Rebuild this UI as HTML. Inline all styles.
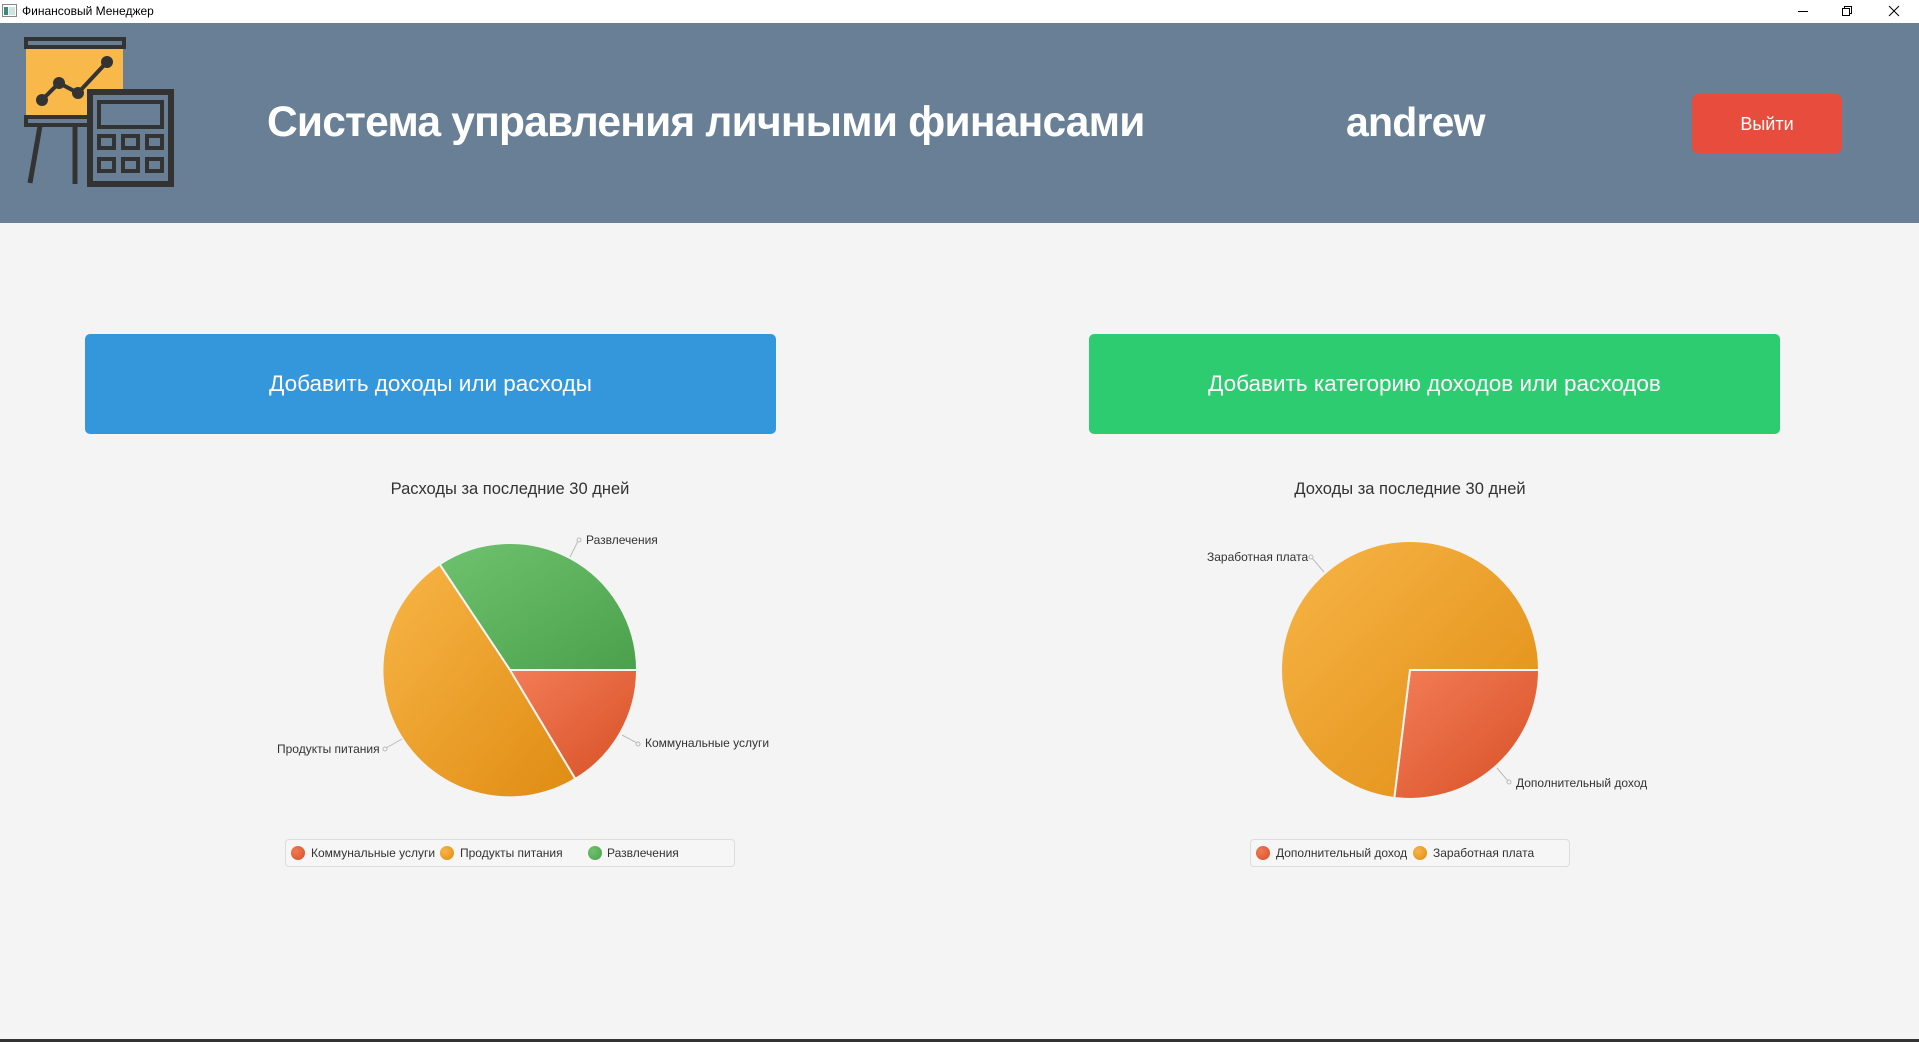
<!DOCTYPE html>
<html><head><meta charset="utf-8"><style>
*{margin:0;padding:0;box-sizing:border-box}
body{width:1919px;height:1042px;overflow:hidden;background:#f4f4f4;font-family:"Liberation Sans","DejaVu Sans",sans-serif;position:relative}
.tb{position:absolute;left:0;top:0;width:1919px;height:23px;background:#fff}
.tb .t{position:absolute;left:22px;top:4px;font-size:12px;color:#000}
.hd{position:absolute;left:0;top:23px;width:1919px;height:200px;background:#687f95}
.title{position:absolute;left:267px;top:99px;font-size:42.5px;font-weight:bold;color:#fff;white-space:nowrap;letter-spacing:-0.8px}
.user{position:absolute;left:1346px;top:99px;font-size:41px;font-weight:bold;color:#fff;letter-spacing:-0.8px}
.out{position:absolute;left:1692px;top:94px;width:150px;height:60px;background:#e74c3c;border-radius:7px;color:#fff;font-size:18px;text-align:center;line-height:60px}
.btn{position:absolute;top:334px;width:691px;height:100px;border-radius:5px;color:#fff;font-size:22.5px;text-align:center;line-height:100px}
.ct{position:absolute;top:480px;font-size:16.5px;color:#333;width:400px;text-align:center}
.lbl{position:absolute;font-size:12px;color:#333;white-space:nowrap}
.lg{position:absolute;top:839px;height:28px;border:1px solid #ddd;border-radius:4px;background:#f6f6f6}
.dot{position:absolute;width:14px;height:14px;border-radius:50%;top:846px}
</style></head><body>
<div class="tb">
<svg style="position:absolute;left:2px;top:4px" width="15" height="14"><rect x="0.5" y="0.5" width="14" height="12" fill="#fff" stroke="#888"/><rect x="2" y="3" width="4" height="8" fill="#3a8a7a"/><rect x="7" y="3" width="6" height="8" fill="#cfe6e0"/></svg>
<div class="t">Финансовый Менеджер</div>
<svg style="position:absolute;left:1795px;top:4px" width="120" height="16" stroke="#000" stroke-width="1" fill="none"><line x1="3" y1="7.5" x2="13" y2="7.5"/><rect x="47.5" y="4.5" width="7" height="7"/><path d="M49.5 4.5V2.5H56.5V9.5H54.5"/><path d="M94 2L104 12M104 2L94 12"/></svg>
</div>
<div class="hd">
<svg style="position:absolute;left:0;top:-23px" width="200" height="200">
<rect x="26" y="47" width="97" height="68" fill="#f8b84a"/>
<g fill="none" stroke="#333" stroke-width="4">
<rect x="26" y="39" width="98" height="8"/>
<rect x="26" y="117" width="72" height="8"/>
<line x1="40" y1="126" x2="30" y2="183" stroke-width="5"/>
<line x1="75" y1="126" x2="75" y2="184" stroke-width="5"/>
<polyline points="42,100 59,83 78,93 107,62" stroke-width="4"/>
</g>
<g fill="#333"><circle cx="42" cy="100" r="6"/><circle cx="59" cy="83" r="6"/><circle cx="78" cy="93" r="6"/><circle cx="107" cy="62" r="6"/></g>
<rect x="90" y="92" width="81" height="92" fill="#687f95" stroke="#333" stroke-width="6"/>
<g fill="none" stroke="#333" stroke-width="4">
<rect x="99" y="102" width="63" height="25"/>
<rect x="99" y="136" width="15" height="12"/><rect x="123" y="136" width="15" height="12"/><rect x="147" y="136" width="15" height="12"/>
<rect x="99" y="159" width="15" height="12"/><rect x="123" y="159" width="15" height="12"/><rect x="147" y="159" width="15" height="12"/>
</g>
</svg>
</div>
<div class="title">Система управления личными финансами</div>
<div class="user">andrew</div>
<div class="out">Выйти</div>
<div class="btn" style="left:85px;background:#3597db">Добавить доходы или расходы</div>
<div class="btn" style="left:1089px;background:#2ecc70">Добавить категорию доходов или расходов</div>
<div class="ct" style="left:310px">Расходы за последние 30 дней</div>
<div class="ct" style="left:1210px">Доходы за последние 30 дней</div>
<svg style="position:absolute;left:0;top:0" width="1919" height="1042">
<defs>
<linearGradient id="go" x1="0" y1="0" x2="1" y2="1"><stop offset="0" stop-color="#f8b547"/><stop offset="1" stop-color="#df8c12"/></linearGradient>
<linearGradient id="gg" x1="0" y1="0" x2="1" y2="1"><stop offset="0" stop-color="#6fc26f"/><stop offset="1" stop-color="#4ba14b"/></linearGradient>
<linearGradient id="gr" x1="0" y1="0" x2="1" y2="1"><stop offset="0" stop-color="#f27d57"/><stop offset="1" stop-color="#d84f25"/></linearGradient>
</defs>
<g stroke="#f4f4f4" stroke-width="2">
<path d="M510 670L637 670A127 127 0 0 0 439.6 564.3Z" fill="url(#gg)"/>
<path d="M510 670L439.6 564.3A127 127 0 0 0 575.4 778.9Z" fill="url(#go)"/>
<path d="M510 670L575.4 778.9A127 127 0 0 0 637 670Z" fill="url(#gr)"/>
<path d="M1410 670L1539 670A129 129 0 0 1 1394.3 798Z" fill="url(#gr)"/>
<path d="M1410 670L1394.3 798A129 129 0 1 1 1539 670Z" fill="url(#go)"/>
</g>
<g stroke="#bbb" stroke-width="1" fill="#f4f4f4">
<line x1="570" y1="557" x2="578" y2="541"/><circle cx="579" cy="540" r="2"/>
<line x1="622" y1="735" x2="637" y2="743"/><circle cx="638" cy="744" r="2"/>
<line x1="402" y1="739" x2="386" y2="748"/><circle cx="385" cy="749" r="2"/>
<line x1="1324" y1="572" x2="1312" y2="558"/><circle cx="1311" cy="557" r="2"/>
<line x1="1497" y1="768" x2="1508" y2="781"/><circle cx="1509" cy="782" r="2"/>
</g>
</svg>
<div class="lbl" style="left:586px;top:533px">Развлечения</div>
<div class="lbl" style="left:645px;top:736px">Коммунальные услуги</div>
<div class="lbl" style="left:277px;top:742px">Продукты питания</div>
<div class="lbl" style="left:1207px;top:550px">Заработная плата</div>
<div class="lbl" style="left:1516px;top:776px">Дополнительный доход</div>
<div class="lg" style="left:285px;width:450px"></div>
<div class="dot" style="left:291px;background:radial-gradient(circle at 35% 35%,#f07a55,#d84f25)"></div>
<div class="lbl" style="left:311px;top:846px">Коммунальные услуги</div>
<div class="dot" style="left:440px;background:radial-gradient(circle at 35% 35%,#f7b547,#df8c12)"></div>
<div class="lbl" style="left:460px;top:846px">Продукты питания</div>
<div class="dot" style="left:588px;background:radial-gradient(circle at 35% 35%,#6fc26f,#4ba14b)"></div>
<div class="lbl" style="left:607px;top:846px">Развлечения</div>
<div class="lg" style="left:1250px;width:320px"></div>
<div class="dot" style="left:1256px;background:radial-gradient(circle at 35% 35%,#f07a55,#d84f25)"></div>
<div class="lbl" style="left:1276px;top:846px">Дополнительный доход</div>
<div class="dot" style="left:1413px;background:radial-gradient(circle at 35% 35%,#f7b547,#df8c12)"></div>
<div class="lbl" style="left:1433px;top:846px">Заработная плата</div>
<div style="position:absolute;left:0;top:1039px;width:1919px;height:3px;background:#333"></div>
</body></html>
